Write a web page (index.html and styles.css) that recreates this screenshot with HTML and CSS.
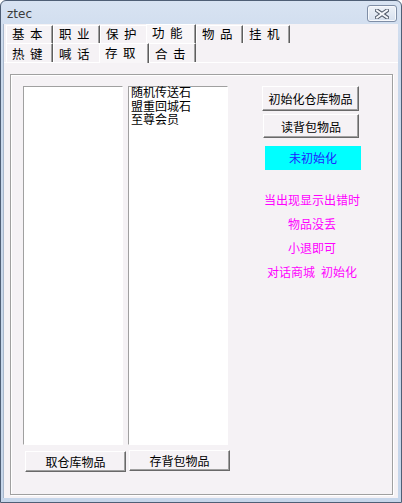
FILE: index.html
```html
<!DOCTYPE html>
<html lang="zh-CN">
  <head>
    <meta charset="UTF-8" />
    <title>ztec</title>
    <link rel="stylesheet" href="styles.css">
  </head>
  <body>
    <div class="window">
      <div class="titlebar">
        <span class="title">ztec</span>
        <button class="close" title="关闭">
          <svg width="14" height="10" viewBox="0 0 14 10">
            <path d="M2 1.5 L12 8.5 M12 1.5 L2 8.5" stroke="#4e5868" stroke-width="4" stroke-linecap="square" />
            <path d="M2 1.5 L12 8.5 M12 1.5 L2 8.5" stroke="#f4f6fa" stroke-width="2" stroke-linecap="square" />
          </svg>
        </button>
      </div>

      <div class="client">
        <div class="tabrow">
          <div class="tab">基本</div>
          <div class="tab">职业</div>
          <div class="tab under">保护</div>
          <div class="tab hot">功能</div>
          <div class="tab">物品</div>
          <div class="tab">挂机</div>
        </div>
        <div class="tabrow second">
          <div class="tab">热键</div>
          <div class="tab under">喊话</div>
          <div class="tab active">存取</div>
          <div class="tab">合击</div>
        </div>

        <div class="page">
          <div class="group">
            <div class="lists">
              <div class="list-row">
                <div class="listbox"></div>
                <div class="listbox">
                  <div class="item">随机传送石</div>
                  <div class="item">盟重回城石</div>
                  <div class="item">至尊会员</div>
                </div>
              </div>
              <div class="btn-row">
                <button class="btn take">取仓库物品</button>
                <button class="btn store">存背包物品</button>
              </div>
            </div>

            <div class="side">
              <button class="btn init">初始化仓库物品</button>
              <button class="btn read">读背包物品</button>
              <div class="status">未初始化</div>
              <div class="notes">
                <p>当出现显示出错时</p>
                <p>物品没丢</p>
                <p>小退即可</p>
                <p>对话商城&ensp;初始化</p>
              </div>
            </div>
          </div>
        </div>
      </div>
    </div>
  </body>
</html>
```

FILE: styles.css
```css
body {
  margin: 0;
  width: 402px;
  height: 503px;
  overflow: hidden;
  font-family: "Noto Sans CJK SC", "DejaVu Sans", sans-serif;
  font-size: 12px;
}
.window {
  box-sizing: border-box;
  height: 503px;
  border: 1px solid #4f5f76;
  border-radius: 6px 6px 0 0;
  background: linear-gradient(#d8e3f2, #c9d8eb 60px, #c6d6ea);
  padding: 0 3px 4px 2px;
  display: flex;
  flex-direction: column;
}
.titlebar {
  height: 23px;
  display: flex;
  align-items: center;
  justify-content: space-between;
  padding: 0 1px 0 4px;
}
.title {
  font-family: "DejaVu Sans", sans-serif;
  font-size: 12px;
  color: #3b3b3b;
  margin-top: 2px;
}
.close {
  width: 30px;
  height: 17px;
  margin-top: 2px;
  padding: 0;
  border: 1px solid #7f8ea6;
  border-radius: 3px;
  background: linear-gradient(#eef2f8, #d6e0ee);
  box-shadow: inset 0 0 0 1px #f7f9fc;
  display: flex;
  align-items: center;
  justify-content: center;
}
.client {
  flex: 1;
  background: #f5f2f5;
  border-left: 1px solid #a9b8cc;
  display: flex;
  flex-direction: column;
}

/* tabs */
.tabrow {
  display: flex;
  height: 18px;
  margin-top: 1px;
  padding-left: 2px;
}
.tabrow.second {
  margin-top: 0;
  height: 19px;
}
.tab {
  box-sizing: border-box;
  width: 47px;
  height: 100%;
  padding: 0 0 0 5px;
  border-top: 1px solid #fff;
  border-left: 1px solid #fff;
  border-right: 1px solid #5e5e5e;
  box-shadow: inset -1px 0 0 #a0a0a0;
  font-size: 12.5px;
  letter-spacing: 5.5px;
  line-height: 16.5px;
  color: #000;
  white-space: nowrap;
}
.second .tab {
  padding-top: 2px;
  line-height: 16px;
}
.tab.under {
  border-right-color: transparent;
  box-shadow: none;
}
.tab.hot,
.tab.active {
  position: relative;
  width: 50px;
  margin-left: -1px;
  background: #f8f6f8;
}
.tab.hot {
  margin-top: -1px;
  height: calc(100% + 1px);
}
.second .tab.active {
  padding-top: 1px;
  line-height: 15px;
  height: calc(100% + 1px);
}
.page {
  flex: 1;
  display: flex;
  border-top: 1px solid #fff;
  padding: 11px 5px 3px 6px;
}

/* group box */
.group {
  flex: 1;
  display: flex;
  border: 1px solid #a0a0a0;
  box-shadow: inset 1px 1px 0 #fff, 1px 1px 0 #fff;
  padding: 11px 0 0 12px;
}
.lists {
  display: flex;
  flex-direction: column;
}
.list-row {
  display: flex;
  gap: 5px;
}
.listbox {
  box-sizing: border-box;
  width: 100px;
  height: 359px;
  background: #fff;
  border: 1px solid;
  border-color: #a0a0a0 #fff #fff #a0a0a0;
  padding: 0 0 0 2px;
}
.item {
  font-family: "Liberation Sans", "Noto Sans CJK SC", sans-serif;
  line-height: 13.5px;
  white-space: nowrap;
}
.btn {
  box-sizing: border-box;
  padding: 0;
  font-family: "Noto Sans CJK SC", "DejaVu Sans", sans-serif;
  font-size: 12px;
  color: #000;
  background: #f5f2f5;
  border: 1px solid;
  border-color: #fff #696969 #696969 #fff;
  box-shadow: inset -1px -1px 0 #a0a0a0;
}
.btn-row {
  display: flex;
  align-items: flex-start;
}
.btn.take {
  width: 101px;
  height: 21px;
  margin: 6px 0 0 2px;
}
.btn.store {
  width: 101px;
  height: 21px;
  margin: 5px 0 0 3px;
}

/* right column */
.side {
  display: flex;
  flex-direction: column;
  align-items: flex-start;
  width: 100px;
  margin-left: 32px;
}
.btn.init {
  width: 97px;
  height: 25px;
}
.btn.read {
  width: 96px;
  height: 24px;
  margin: 3px 0 0 1px;
}
.status {
  width: 96px;
  height: 24px;
  margin: 8px 0 0 3px;
  background: #00ffff;
  color: #2020ff;
  line-height: 24px;
  text-align: center;
}
.notes {
  align-self: stretch;
  margin-top: 18px;
  color: #ff00ff;
  text-align: center;
}
.notes p {
  margin: 0;
  line-height: 24px;
  white-space: nowrap;
}
```
